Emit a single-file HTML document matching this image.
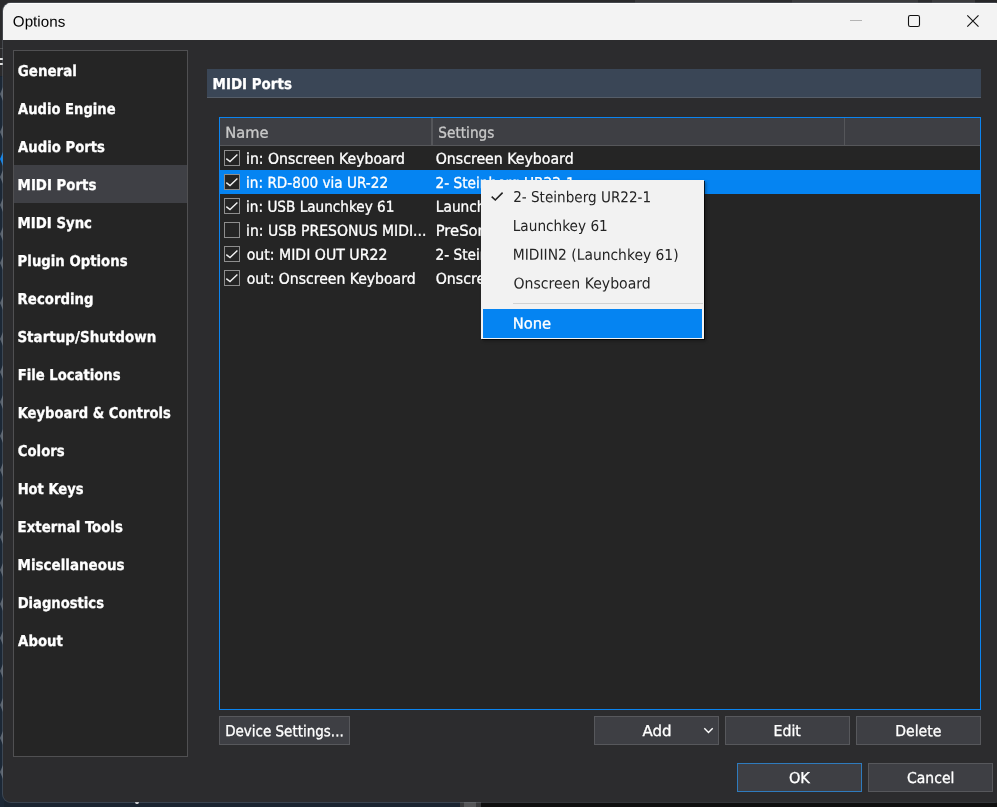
<!DOCTYPE html>
<html>
<head>
<meta charset="utf-8">
<title>Options</title>
<style>
html,body{margin:0;padding:0;}
body{width:997px;height:807px;overflow:hidden;position:relative;background:#1a2430;
  font-family:"DejaVu Sans Condensed","DejaVu Sans","Liberation Sans",sans-serif;font-size:15px;color:#fff;}
.abs{position:absolute;}
#bg{position:absolute;left:0;top:0;width:997px;height:807px;}
#win{position:absolute;will-change:transform;left:3px;top:3px;width:1000px;height:799px;background:#2c2c2e;border-radius:8px;overflow:hidden;box-shadow:0 0 0 1px rgba(120,130,140,.35);}
#inner{position:absolute;left:-3px;top:-3px;width:1003px;height:803px;}
#title{left:3px;top:3px;width:1000px;height:37px;background:#f3f3f3;}
.tx{position:absolute;line-height:20px;white-space:nowrap;transform-origin:0 50%;-webkit-text-stroke:0.3px currentColor;}
#side{left:13px;top:50px;width:173px;height:705px;background:#252525;border:1px solid #505052;}
#hbar{left:207px;top:69px;width:774px;height:29px;background:#3a4656;border-bottom:1px solid #555d68;box-sizing:border-box;}
#list{left:219px;top:117px;width:760px;height:591px;background:#252525;border:1px solid #0b84f0;}
#lhead{left:0;top:0;width:760px;height:27px;background:#3e3f44;border-bottom:1px solid #56575a;}
.vsep{position:absolute;top:0;width:1px;height:27px;background:#55565a;}
.cb{position:absolute;left:224px;width:14px;height:14px;border:1px solid #8e8e8e;background:#252525;}
.cb .ck{position:absolute;left:-1px;top:-1px;}
.btn{position:absolute;height:27px;background:#3e3f44;border:1px solid #57585c;}
#menu{left:481px;top:180px;width:223px;height:159px;background:#f2f2f2;box-shadow:1px 1px 0 rgba(0,0,0,.75),2px 2px 3px rgba(0,0,0,.35);}

</style>
</head>
<body>
<div id="bg">
  <div class="abs" style="left:0;top:0;width:635px;height:4px;background:#2a2a2c"></div>
  <div class="abs" style="left:635px;top:0;width:362px;height:4px;background:#3a3a3c"></div>
  <div class="abs" style="left:760px;top:0;width:32px;height:4px;background:#2c2c2e"></div>
  <div class="abs" style="left:918px;top:0;width:14px;height:4px;background:#2c2c2e"></div>
  <div class="abs" style="left:975px;top:0;width:22px;height:3px;background:#262628"></div>
  <div class="abs" style="left:0;top:0;width:5px;height:76px;background:#2a2a2c"></div>
  <svg class="abs" style="left:0;top:0" width="4" height="807" viewBox="0 0 4 807"><rect x="0" y="77" width="4" height="730" fill="#1c2836"/><path d="M3 87 L0 94 L3 101 Z" fill="#5a636e"/><path d="M3 125 L0 132 L3 139 Z" fill="#5a636e"/><path d="M3 170 L0 177 L3 184 Z" fill="#5a636e"/><path d="M3 198 L0 205 L3 212 Z" fill="#5a636e"/><path d="M3 227 L0 234 L3 241 Z" fill="#5a636e"/><path d="M3 256 L0 263 L3 270 Z" fill="#5a636e"/><path d="M3 296 L0 303 L3 310 Z" fill="#5a636e"/><path d="M3 332 L0 339 L3 346 Z" fill="#5a636e"/><path d="M3 365 L0 372 L3 379 Z" fill="#5a636e"/><path d="M3 395 L0 402 L3 409 Z" fill="#5a636e"/><path d="M3 429 L0 436 L3 443 Z" fill="#5a636e"/><path d="M3 463 L0 470 L3 477 Z" fill="#5a636e"/><path d="M3 496 L0 503 L3 510 Z" fill="#5a636e"/><path d="M3 530 L0 537 L3 544 Z" fill="#5a636e"/><path d="M3 563 L0 570 L3 577 Z" fill="#5a636e"/><path d="M3 597 L0 604 L3 611 Z" fill="#5a636e"/><path d="M3 631 L0 638 L3 645 Z" fill="#5a636e"/><path d="M3 664 L0 671 L3 678 Z" fill="#5a636e"/><path d="M3 698 L0 705 L3 712 Z" fill="#5a636e"/><path d="M3 731 L0 738 L3 745 Z" fill="#5a636e"/><path d="M3 765 L0 772 L3 779 Z" fill="#5a636e"/><path d="M3 152 L0 159 L3 166 Z" fill="#0a84f0"/><rect x="0" y="58" width="3" height="2" fill="#ddd"/><rect x="0" y="63" width="3" height="2" fill="#ddd"/><rect x="0" y="48" width="4" height="1" fill="#4a4a4c"/></svg>
  <div class="abs" style="left:460px;top:800px;width:537px;height:7px;background:#0f0f0f"></div>
  <div class="abs" style="left:460px;top:800px;width:21px;height:7px;background:#38383a"></div>
  <div class="abs" style="left:464px;top:800px;width:12px;height:7px;background:#555557"></div>
  <div class="abs" style="left:135px;top:802px;width:4px;height:2px;background:#e8e8e8;border-radius:0 0 2px 2px"></div>
</div>
<div id="win"><div id="inner">
  <div id="title" class="abs"><div class="abs" style="left:0;top:0;width:1000px;height:1px;background:#fdfdfd"></div></div>
  <svg class="abs" style="left:837px;top:3px" width="160" height="37" viewBox="0 0 160 37">
    <line x1="13" y1="17.5" x2="25" y2="17.5" stroke="#b4b4b4" stroke-width="1"/>
    <rect x="71.5" y="12.5" width="11" height="11" rx="1.8" fill="none" stroke="#111" stroke-width="1.1"/>
    <path d="M130.3 12.4 L141.5 23.6 M141.5 12.4 L130.3 23.6" stroke="#111" stroke-width="1.1" fill="none"/>
  </svg>
  <div id="side" class="abs"><div class="abs" style="left:0;top:114px;width:173px;height:38px;background:#3f4045"></div></div>
  <div id="hbar" class="abs"></div>
  <div id="list" class="abs">
    <div id="lhead" class="abs"></div>
    <div class="vsep" style="left:211px;width:2px"></div>
    <div class="vsep" style="left:624px"></div>
    <div class="abs" style="left:0;top:52px;width:760px;height:24px;background:#0584f2"></div>
  </div>
<div class="cb" style="top:150px"><svg class="ck" width="16" height="16" viewBox="0 0 16 16"><path d="M2.3 8.6 L6 11.6 L13.4 4.4" stroke="#f0f0f0" stroke-width="1.4" fill="none"/></svg></div>
<div class="cb" style="top:174px"><svg class="ck" width="16" height="16" viewBox="0 0 16 16"><path d="M2.3 8.6 L6 11.6 L13.4 4.4" stroke="#f0f0f0" stroke-width="1.4" fill="none"/></svg></div>
<div class="cb" style="top:198px"><svg class="ck" width="16" height="16" viewBox="0 0 16 16"><path d="M2.3 8.6 L6 11.6 L13.4 4.4" stroke="#f0f0f0" stroke-width="1.4" fill="none"/></svg></div>
<div class="cb" style="top:222px"></div>
<div class="cb" style="top:246px"><svg class="ck" width="16" height="16" viewBox="0 0 16 16"><path d="M2.3 8.6 L6 11.6 L13.4 4.4" stroke="#f0f0f0" stroke-width="1.4" fill="none"/></svg></div>
<div class="cb" style="top:270px"><svg class="ck" width="16" height="16" viewBox="0 0 16 16"><path d="M2.3 8.6 L6 11.6 L13.4 4.4" stroke="#f0f0f0" stroke-width="1.4" fill="none"/></svg></div>

  <div class="btn" style="left:219px;top:716px;width:129px"></div>
  <div class="btn" style="left:594px;top:716px;width:123px"></div>
  <svg class="abs" style="left:702px;top:726px" width="13" height="9" viewBox="0 0 13 9"><path d="M2.300 2.300 L6.500 6.500 L10.700 2.300" stroke="#fff" stroke-width="1.400" fill="none"/></svg>
  <div class="btn" style="left:725px;top:716px;width:123px"></div>
  <div class="btn" style="left:856px;top:716px;width:123px"></div>
  <div class="btn" style="left:737px;top:763px;width:123px;border-color:#2f7bbd"></div>
  <div class="btn" style="left:868px;top:763px;width:123px"></div>
  <span class="tx" style="left:12px;top:11px;transform:matrix(1.0135,0.001,0,1,0.84,0.60);color:#000;-webkit-text-stroke:0;font-family:'Liberation Sans',sans-serif;font-size:15px;">Options</span>
  <span class="tx" style="left:17px;top:60px;transform:matrix(0.9941,0.001,0,1,0.78,0.90);color:#fff;font-weight:bold;">General</span>
  <span class="tx" style="left:18px;top:98px;transform:matrix(0.9731,0.001,0,1,0.11,0.90);color:#fff;font-weight:bold;">Audio Engine</span>
  <span class="tx" style="left:18px;top:136px;transform:matrix(0.9804,0.001,0,1,0.11,0.90);color:#fff;font-weight:bold;">Audio Ports</span>
  <span class="tx" style="left:17px;top:174px;transform:matrix(0.9885,0.001,0,1,0.61,0.90);color:#fff;font-weight:bold;">MIDI Ports</span>
  <span class="tx" style="left:17px;top:212px;transform:matrix(0.9849,0.001,0,1,0.62,0.90);color:#fff;font-weight:bold;">MIDI Sync</span>
  <span class="tx" style="left:17px;top:250px;transform:matrix(0.9828,0.001,0,1,0.62,0.90);color:#fff;font-weight:bold;">Plugin Options</span>
  <span class="tx" style="left:17px;top:288px;transform:matrix(0.9855,0.001,0,1,0.62,0.90);color:#fff;font-weight:bold;">Recording</span>
  <span class="tx" style="left:17px;top:326px;transform:matrix(0.9993,0.001,0,1,0.39,0.90);color:#fff;font-weight:bold;">Startup/Shutdown</span>
  <span class="tx" style="left:17px;top:364px;transform:matrix(0.9781,0.001,0,1,0.63,0.90);color:#fff;font-weight:bold;">File Locations</span>
  <span class="tx" style="left:17px;top:402px;transform:matrix(0.9730,0.001,0,1,0.63,0.90);color:#fff;font-weight:bold;">Keyboard &amp; Controls</span>
  <span class="tx" style="left:17px;top:440px;transform:matrix(0.9813,0.001,0,1,0.79,0.90);color:#fff;font-weight:bold;">Colors</span>
  <span class="tx" style="left:17px;top:478px;transform:matrix(0.9714,0.001,0,1,0.63,0.90);color:#fff;font-weight:bold;">Hot Keys</span>
  <span class="tx" style="left:17px;top:516px;transform:matrix(0.9865,0.001,0,1,0.62,0.90);color:#fff;font-weight:bold;">External Tools</span>
  <span class="tx" style="left:17px;top:554px;transform:matrix(0.9965,0.001,0,1,0.61,0.90);color:#fff;font-weight:bold;">Miscellaneous</span>
  <span class="tx" style="left:17px;top:592px;transform:matrix(0.9745,0.001,0,1,0.63,0.90);color:#fff;font-weight:bold;">Diagnostics</span>
  <span class="tx" style="left:18px;top:630px;transform:matrix(0.9872,0.001,0,1,0.11,0.90);color:#fff;font-weight:bold;">About</span>
  <span class="tx" style="left:212px;top:73px;transform:matrix(0.9949,0.001,0,1,0.61,0.90);color:#fff;font-weight:bold;">MIDI Ports</span>
  <span class="tx" style="left:225px;top:122px;transform:matrix(1.0842,0.001,0,1,0.26,0.80);color:#c9c9c9;">Name</span>
  <span class="tx" style="left:438px;top:122px;transform:matrix(1.0111,0.001,0,1,0.35,0.80);color:#c9c9c9;">Settings</span>
  <span class="tx" style="left:246px;top:148px;transform:matrix(1.0407,0.001,0,1,0.04,0.70);color:#fff;">in: Onscreen Keyboard</span>
  <span class="tx" style="left:435px;top:148px;transform:matrix(1.0478,0.001,0,1,0.70,0.70);color:#fff;">Onscreen Keyboard</span>
  <span class="tx" style="left:246px;top:172px;transform:matrix(1.0084,0.001,0,1,0.08,0.70);color:#fff;">in: RD-800 via UR-22</span>
  <span class="tx" style="left:435px;top:173px;transform:matrix(1.0157,0.001,0,1,0.43,0.00);color:#fff;">2- Steinberg UR22-1</span>
  <span class="tx" style="left:246px;top:196px;transform:matrix(1.0088,0.001,0,1,0.08,0.70);color:#fff;">in: USB Launchkey 61</span>
  <span class="tx" style="left:435px;top:196px;transform:matrix(1.0180,0.001,0,1,0.83,0.70);color:#fff;">Launchkey 61</span>
  <span class="tx" style="left:246px;top:220px;transform:matrix(1.0364,0.001,0,1,0.05,0.70);color:#fff;">in: USB PRESONUS MIDI...</span>
  <span class="tx" style="left:435px;top:220px;transform:matrix(1.0950,0.001,0,1,0.75,0.70);color:#fff;">PreSonus</span>
  <span class="tx" style="left:246px;top:244px;transform:matrix(1.0452,0.001,0,1,0.70,0.70);color:#fff;">out: MIDI OUT UR22</span>
  <span class="tx" style="left:435px;top:244px;transform:matrix(1.0157,0.001,0,1,0.43,0.70);color:#fff;">2- Steinberg UR22-1</span>
  <span class="tx" style="left:246px;top:268px;transform:matrix(1.0388,0.001,0,1,0.70,0.70);color:#fff;">out: Onscreen Keyboard</span>
  <span class="tx" style="left:435px;top:268px;transform:matrix(1.0478,0.001,0,1,0.70,0.70);color:#fff;">Onscreen Keyboard</span>
  <span class="tx" style="left:225px;top:721px;transform:matrix(0.9990,0.001,0,1,0.16,0.10);color:#fff;">Device Settings...</span>
  <span class="tx" style="left:642px;top:721px;transform:matrix(1.1120,0.001,0,1,0.57,0.10);color:#fff;">Add</span>
  <span class="tx" style="left:773px;top:721px;transform:matrix(1.0430,0.001,0,1,0.61,0.10);color:#fff;">Edit</span>
  <span class="tx" style="left:895px;top:721px;transform:matrix(1.0422,0.001,0,1,0.21,0.10);color:#fff;">Delete</span>
  <span class="tx" style="left:788px;top:768px;transform:matrix(1.0772,0.001,0,1,0.89,0.00);color:#fff;">OK</span>
  <span class="tx" style="left:907px;top:768px;transform:matrix(1.0368,0.001,0,1,0.01,0.00);color:#fff;">Cancel</span>
  <div id="menu" class="abs">
    <div class="abs" style="left:32px;top:123px;width:190px;height:1px;background:#d2d2d2"></div>
    <div class="abs" style="left:2px;top:129px;width:219px;height:29px;background:#0584f2"></div>
  </div>
  <svg class="abs" style="left:489px;top:189px" width="16" height="14" viewBox="0 0 16 14"><path d="M2.700 7.700 L6.300 11 L13.600 3.600" stroke="#222" stroke-width="1.600" fill="none"/></svg>
  <span class="tx" style="left:513px;top:187px;transform:matrix(1.0068,0.001,0,1,0.13,0.10);color:#242424;-webkit-text-stroke:0;">2- Steinberg UR22-1</span>
  <span class="tx" style="left:512px;top:215px;transform:matrix(1.0124,0.001,0,1,0.74,0.90);color:#242424;-webkit-text-stroke:0;">Launchkey 61</span>
  <span class="tx" style="left:512px;top:244px;transform:matrix(1.0281,0.001,0,1,0.72,0.80);color:#242424;-webkit-text-stroke:0;">MIDIIN2 (Launchkey 61)</span>
  <span class="tx" style="left:513px;top:273px;transform:matrix(1.0440,0.001,0,1,0.40,0.40);color:#242424;-webkit-text-stroke:0;">Onscreen Keyboard</span>
  <span class="tx" style="left:512px;top:313px;transform:matrix(1.0951,0.001,0,1,0.65,0.60);color:#fff;">None</span>
</div></div>
</body>
</html>
